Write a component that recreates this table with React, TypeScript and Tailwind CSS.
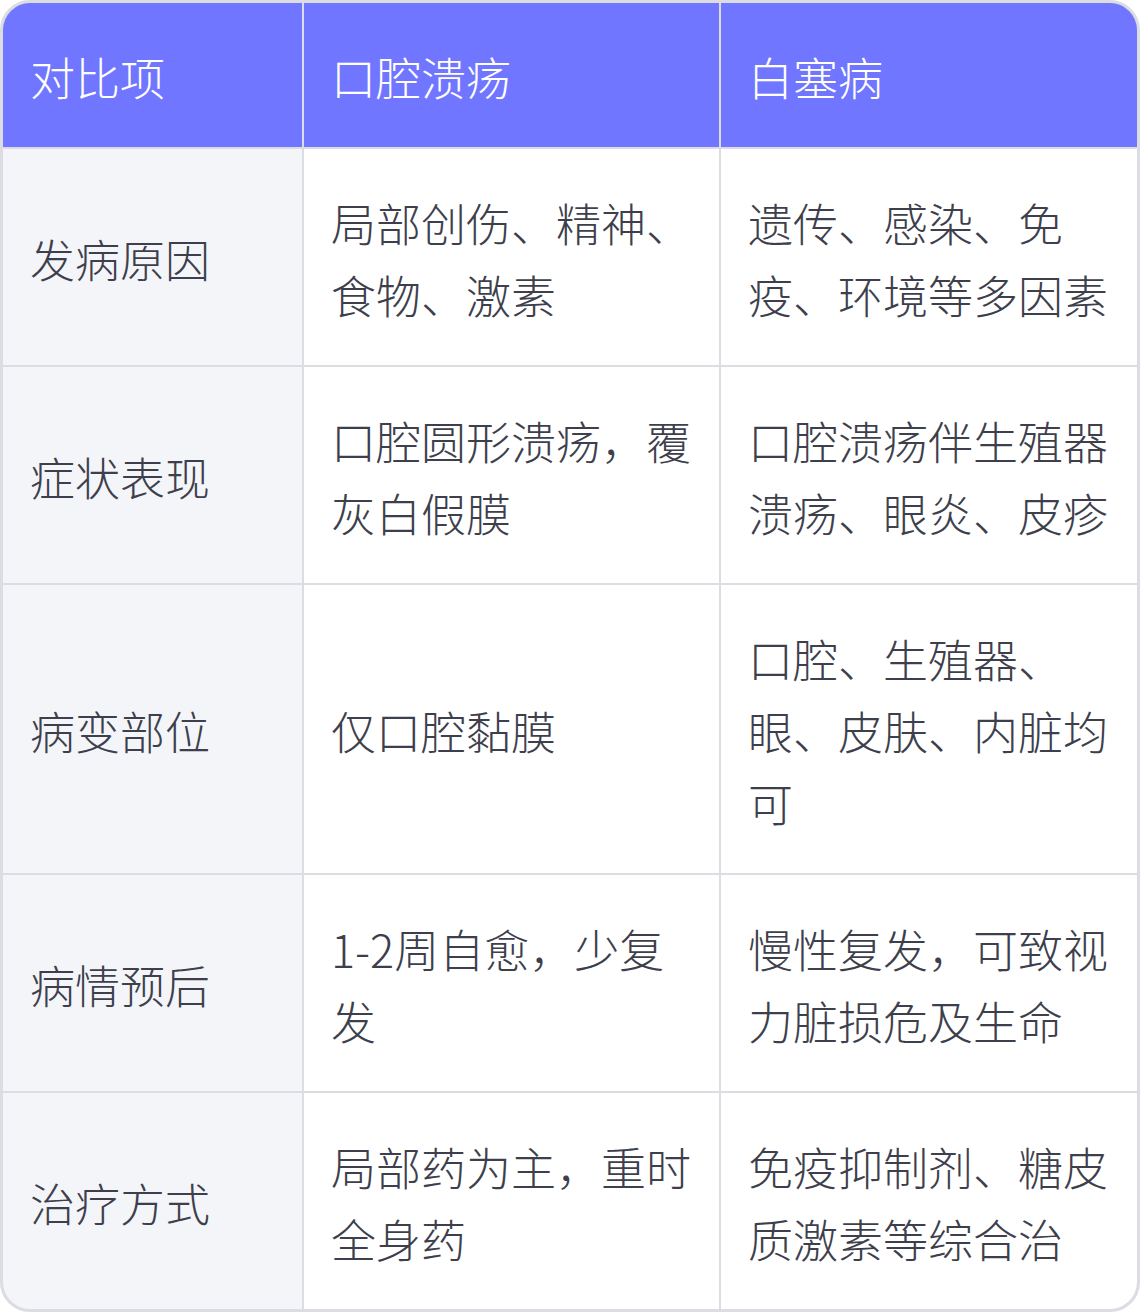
const headers = ['对比项', '口腔溃疡', '白塞病'];

const rows: [string, string, string][] = [
  ['发病原因', '局部创伤、精神、食物、激素', '遗传、感染、免疫、环境等多因素'],
  ['症状表现', '口腔圆形溃疡，覆灰白假膜', '口腔溃疡伴生殖器溃疡、眼炎、皮疹'],
  ['病变部位', '仅口腔黏膜', '口腔、生殖器、眼、皮肤、内脏均可'],
  ['病情预后', '1-2周自愈，少复发', '慢性复发，可致视力脏损危及生命'],
  ['治疗方式', '局部药为主，重时全身药', '免疫抑制剂、糖皮质激素等综合治'],
];

const font = { fontFamily: '"Noto Sans CJK SC", "Noto Sans", sans-serif' };

export default function App() {
  return (
    <div className="w-[1140px] bg-white" style={font}>
      <div className="grid grid-cols-[299px_415px_416px] gap-[2px] overflow-hidden rounded-[30px] border-[3px] border-[#dcdde2] bg-[#dcdde2] text-[45px] font-light leading-[72px]">
        {headers.map((h) => (
          <div key={h} className="flex items-center bg-[#7076ff] px-[27px] pt-[38px] pb-[34px] text-white">
            {h}
          </div>
        ))}
        {rows.map((r) => (
          <div key={r[0]} className="contents">
            <div className="flex items-center bg-[#f4f5f9] px-[27px] pt-[38px] pb-[34px] text-[#3d404c]">{r[0]}</div>
            <div className="flex items-center bg-white px-[27px] pt-[38px] pb-[34px] text-[#3d404c]">{r[1]}</div>
            <div className="flex items-center bg-white px-[27px] pt-[38px] pb-[34px] text-[#3d404c]">{r[2]}</div>
          </div>
        ))}
      </div>
    </div>
  );
}
